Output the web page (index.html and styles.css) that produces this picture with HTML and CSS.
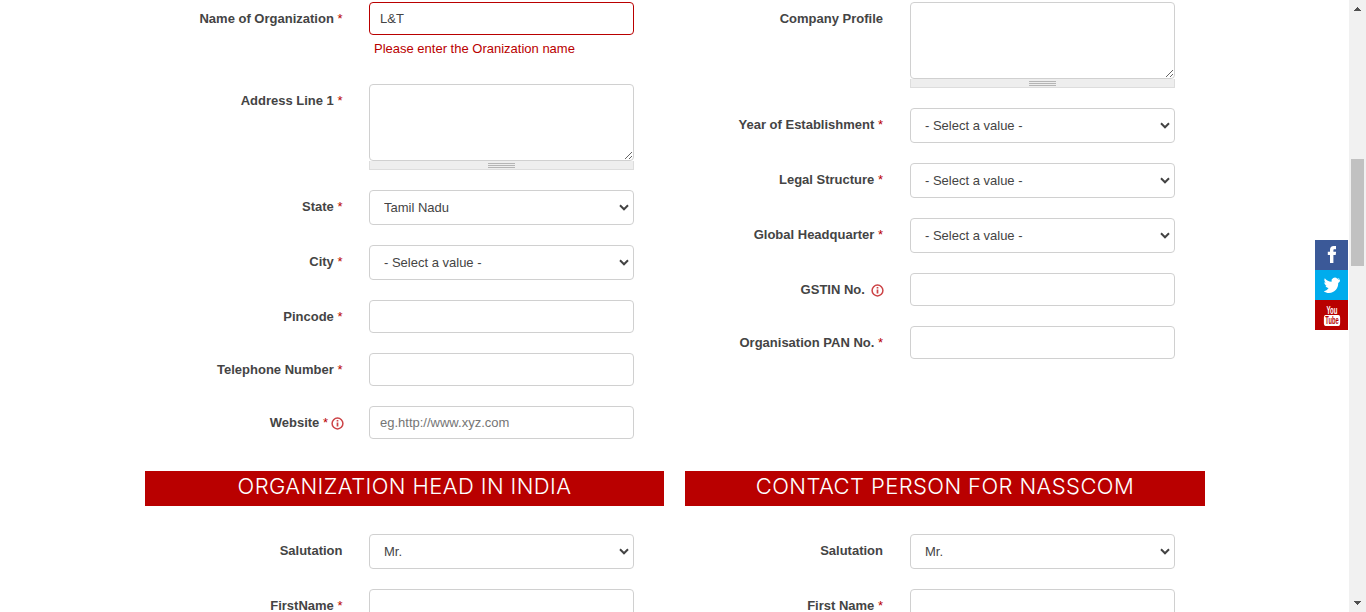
FILE: index.html
```
<!DOCTYPE html>
<html lang="en">
<head>
<meta charset="utf-8">
<title>Membership Form</title>
<link rel="stylesheet" href="styles.css">
</head>
<body>
<div class="viewport">
  <main class="form">
    <section class="columns details">
      <div class="column">
        <div class="row row-error">
          <label class="label">Name of Organization <span class="req">*</span></label>
          <div class="field"><input class="input invalid" type="text" value="L&amp;T"><p class="error">Please enter the Oranization name</p></div>
        </div>
        <div class="row">
          <label class="label">Address Line 1 <span class="req">*</span></label>
          <div class="field"><textarea class="area"></textarea><div class="grippie"><span class="grip"></span></div></div>
        </div>
        <div class="row">
          <label class="label">State <span class="req">*</span></label>
          <div class="field"><select class="select"><option>Tamil Nadu</option></select></div>
        </div>
        <div class="row">
          <label class="label">City <span class="req">*</span></label>
          <div class="field"><select class="select"><option>- Select a value -</option></select></div>
        </div>
        <div class="row">
          <label class="label">Pincode <span class="req">*</span></label>
          <div class="field"><input class="input" type="text"></div>
        </div>
        <div class="row">
          <label class="label">Telephone Number <span class="req">*</span></label>
          <div class="field"><input class="input" type="text"></div>
        </div>
        <div class="row">
          <label class="label label-info">Website <span class="req">*</span><svg class="info info-tight" viewBox="0 0 13 13"><circle cx="6.5" cy="6.5" r="5.400"/><path class="mark" d="M6.500 3v1.500M6.500 5.500v4"/></svg></label>
          <div class="field"><input class="input" type="text" placeholder="eg.http://www.xyz.com"></div>
        </div>
      </div>
      <div class="column">
        <div class="row">
          <label class="label">Company Profile</label>
          <div class="field"><textarea class="area"></textarea><div class="grippie"><span class="grip"></span></div></div>
        </div>
        <div class="row">
          <label class="label">Year of Establishment <span class="req">*</span></label>
          <div class="field"><select class="select"><option>- Select a value -</option></select></div>
        </div>
        <div class="row">
          <label class="label">Legal Structure <span class="req">*</span></label>
          <div class="field"><select class="select"><option>- Select a value -</option></select></div>
        </div>
        <div class="row">
          <label class="label">Global Headquarter <span class="req">*</span></label>
          <div class="field"><select class="select"><option>- Select a value -</option></select></div>
        </div>
        <div class="row">
          <label class="label">GSTIN No. <svg class="info" viewBox="0 0 13 13"><circle cx="6.5" cy="6.5" r="5.400"/><path class="mark" d="M6.500 3v1.500M6.500 5.500v4"/></svg></label>
          <div class="field"><input class="input" type="text"></div>
        </div>
        <div class="row">
          <label class="label">Organisation PAN No. <span class="req">*</span></label>
          <div class="field"><input class="input" type="text"></div>
        </div>
      </div>
    </section>
    <section class="columns people">
      <div class="column">
        <h2 class="heading">ORGANIZATION HEAD IN INDIA</h2>
        <div class="row">
          <label class="label">Salutation</label>
          <div class="field"><select class="select"><option>Mr.</option></select></div>
        </div>
        <div class="row">
          <label class="label">FirstName <span class="req">*</span></label>
          <div class="field"><input class="input" type="text"></div>
        </div>
      </div>
      <div class="column">
        <h2 class="heading">CONTACT PERSON FOR NASSCOM</h2>
        <div class="row">
          <label class="label">Salutation</label>
          <div class="field"><select class="select"><option>Mr.</option></select></div>
        </div>
        <div class="row">
          <label class="label">First Name <span class="req">*</span></label>
          <div class="field"><input class="input" type="text"></div>
        </div>
      </div>
    </section>
  </main>
  <nav class="social">
    <a class="social-link facebook"><svg viewBox="0 0 33 30"><path d="M15 23v-8h-2.200v-3.200H15V10c0-2.900 1.300-4 3.600-4H21v3.200h-1.400c-1 0-1.200.4-1.200 1.200v1.400h2.700l-.4 3.200h-2.300v8z"/></svg></a>
    <a class="social-link twitter"><svg viewBox="0 0 33 30"><path d="M24.900 9.200c-.6.300-1.200.5-1.900.6.700-.4 1.200-1 1.400-1.800-.6.400-1.300.7-2.100.8a3.300 3.300 0 0 0-5.700 3c-2.700-.1-5.200-1.400-6.800-3.500-.9 1.500-.4 3.400 1 4.400-.5 0-1-.2-1.500-.4 0 1.600 1.100 3 2.700 3.300-.5.100-1 .2-1.500.1.400 1.300 1.600 2.200 3.100 2.300A6.700 6.700 0 0 1 8.800 21.400c1.500.9 3.200 1.500 5.100 1.500 6.100 0 9.600-5.200 9.300-9.900.7-.5 1.200-1 1.700-1.700z"/></svg></a>
    <a class="social-link youtube"><span class="you">You</span><span class="tube">Tube</span></a>
  </nav>
  <div class="scrollbar">
    <svg class="arrow" viewBox="0 0 7 4"><path d="M3 0h1v1h1v1h1v1h1v1H0V3h1V2h1V1h1z"/></svg>
    <div class="track"><div class="thumb"></div></div>
    <svg class="arrow" viewBox="0 0 7 4"><path d="M0 0h7v1H6v1H5v1H4v1H3V3H2V2H1V1H0z"/></svg>
  </div>
</div>
</body>
</html>
```
FILE: styles.css
```
* { box-sizing: border-box; }
body {
  margin: 0;
  overflow: hidden;
  background: #fff;
  color: #444;
  font: 13px/20px "Liberation Sans", Arial, sans-serif;
}
.viewport {
  display: flex;
  height: 612px;
  overflow: hidden;
}
.form { width: 1060px; margin-left: 145px; flex: none; }
.columns { display: grid; grid-template-columns: 519px 520px; column-gap: 21px; }
.column { display: flex; flex-direction: column; gap: 20px; }
.details { padding-top: 2px; height: 471px; }
.row { display: flex; }
.row-error { height: 62px; }
.label {
  width: 197.5px;
  margin-right: 26.5px;
  line-height: 33px;
  font-weight: bold;
  text-align: right;
  white-space: nowrap;
}
.column + .column .label { width: 198px; margin-right: 27px; }
.label-info { width: 199px; margin-right: 25px; }
.req { color: #b90000; font-weight: normal; }
.info {
  width: 13px;
  height: 13px;
  margin: 0 -.5px 0 2px;
  vertical-align: -2.5px;
  fill: none;
  stroke: #cc4346;
  stroke-width: 1.5;
}
.mark { stroke-width: 1.7; }
.info-tight { margin: 0 0 0 3px; }
.field { width: 265px; }
.input, .select, .area {
  display: block;
  width: 265px;
  margin: 0;
  border: 1px solid #d0d0d0;
  border-radius: 4px;
  outline: 0;
  background: #fff;
  color: #444;
  font: 13px "Liberation Sans", Arial, sans-serif;
}
.input { height: 33px; padding: 0 10px; }
.input::placeholder { color: #757575; }
.invalid { border-color: #b90000; }
.select {
  height: 35px;
  padding: 0 24px 0 14px;
  appearance: none;
  background: #fff url("data:image/svg+xml,%3Csvg xmlns='http://www.w3.org/2000/svg' width='10' height='7'%3E%3Cpath d='M1 1.300l4 4 4-4' fill='none' stroke='%23444' stroke-width='2'/%3E%3C/svg%3E") no-repeat right 4px top 13px;
}
.area { height: 77px; resize: vertical; }
.error { margin: 4px 0 0 5px; color: #b90000; }
.grippie {
  display: flex;
  justify-content: center;
  height: 9px;
  padding-top: 2px;
  border: 1px solid #ddd;
  border-top: 0;
  background: #eee;
}
.grip {
  width: 27px;
  height: 5px;
  background: repeating-linear-gradient(#b5b5b5 0 1px, #eee 1px 2px);
}
.heading {
  height: 35px;
  margin: 0 0 8px;
  background: #b90000;
  color: #fff;
  font: 300 22px/31px Inter, "Liberation Sans", sans-serif;
  letter-spacing: .4px;
  text-align: center;
}
.social { width: 33px; margin: 240px 1px 0 110px; flex: none; }
.social-link { display: block; height: 30px; }
.social-link svg { display: block; width: 33px; height: 30px; fill: #fff; }
.facebook { background: #3b5998; }
.twitter { background: #00aced; }
.youtube {
  display: flex;
  flex-direction: column;
  align-items: center;
  padding: 5px 0 0 1px;
  background: #b90000;
  color: #fff;
  font: bold 11px/10px "Liberation Sans", Arial, sans-serif;
}
.you { transform: scaleX(.55); }
.tube {
  width: 28px;
  height: 11px;
  border-radius: 3px;
  background: #fff;
  color: #b90000;
  font-size: 10px;
  line-height: 11px;
  text-align: center;
  transform: scaleX(.58);
}
.scrollbar {
  display: flex;
  flex-direction: column;
  align-items: center;
  width: 17px;
  height: 612px;
  padding: 7px 0;
  background: #f1f1f1;
}
.arrow { width: 7px; height: 4px; fill: #505050; shape-rendering: crispEdges; }
.track { flex: 1; padding-top: 148px; }
.thumb { width: 13px; height: 107px; background: #c1c1c1; }
```
